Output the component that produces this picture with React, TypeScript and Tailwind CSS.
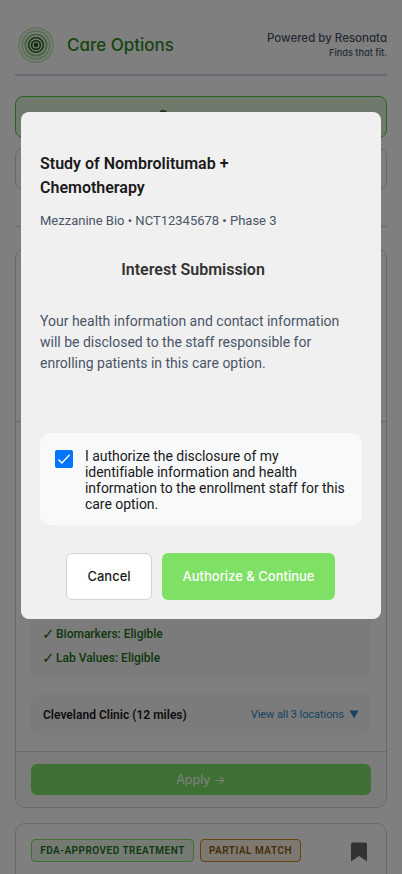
import React from "react";

const roboto = "font-['Roboto','Liberation_Sans',sans-serif]";
const brand = "font-['Inter','Liberation_Sans',sans-serif] [font-feature-settings:'cv11']";

function Rings() {
  const rings: [number, number][] = [[17, 0.3], [13.8, 0.45], [10.6, 0.7], [7.4, 0.9], [4.4, 1]];
  return (
    <svg width="36" height="36" viewBox="0 0 36 36" fill="none">
      {rings.map(([r, o]) => (
        <circle key={r} cx="18" cy="18" r={r} strokeOpacity={o} strokeWidth="1.8" stroke={r < 9 ? "#1f6414" : "#4bb535"} />
      ))}
      <circle cx="18" cy="18" r="2.4" fill="#1f6414" />
    </svg>
  );
}

function Check() {
  return <span className="-ml-px inline-block w-[14px] font-['DejaVu_Sans',sans-serif] text-[15px] font-bold leading-6">✓</span>;
}

function Page() {
  return (
    <div className="px-[15px] pt-[26px]">
      <header className="flex h-[50px] items-start justify-between border-b-2 border-[#cbd5e0]">
        <div className="flex items-center gap-[13px] pl-[3px] pt-px">
          <Rings />
          <h1 className={`${brand} text-[17px] font-medium leading-[36px] text-[#2d8a1e]`}>Care Options</h1>
        </div>
        <div className={`${brand} pt-[3px] text-right font-medium text-[#4a5568]`}>
          <p className="text-[11.5px] leading-[18px]">Powered by Resonata</p>
          <p className="text-[9.2px] leading-[11px]">Finds that fit.</p>
        </div>
      </header>
      <div className="mt-5 flex h-[42px] items-start rounded-lg border border-[#55c73a] bg-[#dff5da] pl-[133px] pt-[8px] text-[15px] font-medium leading-[22px] text-[#1a5c0f]">
        <span className="w-[9px] text-[10px]">✓</span>Care
      </div>
      <div className="mt-[10px] h-[42px] rounded-lg border border-[#cbd5e0]" />
      <div className="mt-9 border-t border-[#cbd5e0]" />

      <section className="mt-[21px] flex h-[560px] flex-col overflow-hidden rounded-[10px] border border-[#cbd5e0]">
        <div className="h-[173px] shrink-0 border-b border-[#cbd5e0]" />
        <div className="flex grow flex-col justify-end gap-4 px-[15px] pb-4">
          <div className="flex h-[120px] flex-col justify-end rounded-lg bg-[#f7f7f7] px-3 pb-2 text-[12px] font-medium leading-6 text-[#22701a]">
            <p className="flex h-6"><Check />Biomarkers: Eligible</p>
            <p className="flex h-6"><Check />Lab Values: Eligible</p>
          </div>
          <div className="flex h-[41px] items-center justify-between rounded-lg bg-[#f7f7f7] px-3">
            <span className="text-[12px] font-semibold tracking-[0.02px] text-[#1a1a1a]">Cleveland Clinic (12 miles)</span>
            <span className="flex items-center gap-[5px] pt-px text-[11px] tracking-[-0.06px] text-[#2b86c5]">
              View all 3 locations
              <svg className="-mt-px" width="10" height="9" viewBox="0 0 10 9"><path d="M0.5 0.5h9L5 8.5z" fill="#2b86c5" /></svg>
            </span>
          </div>
        </div>
        <div className="h-[56px] shrink-0 border-t border-[#cbd5e0] bg-[#f9f9f9] px-[15px] pt-3">
          <div className="flex h-[31px] items-center justify-center rounded-md bg-[#7fe066] pt-px font-['Inter',sans-serif] text-[12.5px] text-white">
            Apply →
          </div>
        </div>
      </section>

      <section className="mt-[15px] flex h-[120px] items-start gap-[6px] rounded-[10px] border border-[#cbd5e0] px-[15px] pt-[15px] text-[10px] font-semibold tracking-[0.5px]">
        <span className="flex h-[23px] w-[163px] items-center justify-center rounded border border-[#7fe066] bg-[#eaf7e7] text-[#22701a]">FDA-APPROVED TREATMENT</span>
        <span className="flex h-[23px] w-[101px] items-center justify-center rounded border border-[#c58a1a] bg-[#fcf3e0] text-[#8a5a10]">PARTIAL MATCH</span>
        <svg className="mt-[3px] ml-auto mr-[3px]" width="18" height="20" viewBox="0 0 18 20">
          <path d="M1 2.5Q1 .5 3 .5H15Q17 .5 17 2.5V19.5L9 14L1 19.5Z" fill="#666" />
        </svg>
      </section>
    </div>
  );
}

function Dialog() {
  return (
    <div role="dialog" className="mx-auto mt-[112px] h-[507px] w-[360px] rounded-lg bg-[#f0f0f0] px-[19px] pt-10">
      <h2 className="w-[240px] text-[16px] font-semibold leading-6 text-[#1a1a1a]">Study of Nombrolitumab + Chemotherapy</h2>
      <p className="mt-[11px] text-[13px] leading-5 text-[#4a5568]">Mezzanine Bio • NCT12345678 • Phase 3</p>
      <h3 className="mt-[27px] mr-[16px] text-center text-[16px] font-semibold leading-6 text-[#333]">Interest Submission</h3>
      <p className="mt-[29px] text-[14px] leading-[21px] text-[#4a5568]">
        Your health information and contact information<br />will be disclosed to the staff responsible for<br />enrolling patients in this care option.
      </p>
      <label className="mt-[59px] flex h-[92px] gap-3 rounded-[10px] bg-[#f8f9fb] px-[15px] pt-[15px]">
        <span className="mt-[2px] flex h-[18px] w-[18px] shrink-0 items-center justify-center rounded-[2px] bg-[#0075ff]">
          <svg width="18" height="18" viewBox="0 0 18 18"><path d="M3.4 9.4L6.9 12.9L14.6 4.7" fill="none" stroke="white" strokeWidth="1.4" /></svg>
        </span>
        <span className="whitespace-nowrap text-[14px] leading-4 tracking-[-0.04px] text-[#1a1a1a]">I authorize the disclosure of my<br />identifiable information and health<br />information to the enrollment staff for this<br />care option.</span>
      </label>
      <div className="mt-7 flex gap-[10px] pl-[26px] font-['Inter',sans-serif] text-[13px] font-medium">
        <button className="h-[47px] w-[86px] rounded-md border border-[#cbd5e0] bg-white pt-px text-[#1a1a1a]">Cancel</button>
        <button className="h-[47px] w-[173px] rounded-md bg-[#7fe066] pt-px text-white">Authorize &amp; Continue</button>
      </div>
    </div>
  );
}

export default function App() {
  return (
    <div className={`${roboto} relative h-[874px] w-[402px] overflow-hidden bg-white`}>
      <Page />
      <div className="absolute inset-0 bg-black/50">
        <Dialog />
      </div>
    </div>
  );
}
